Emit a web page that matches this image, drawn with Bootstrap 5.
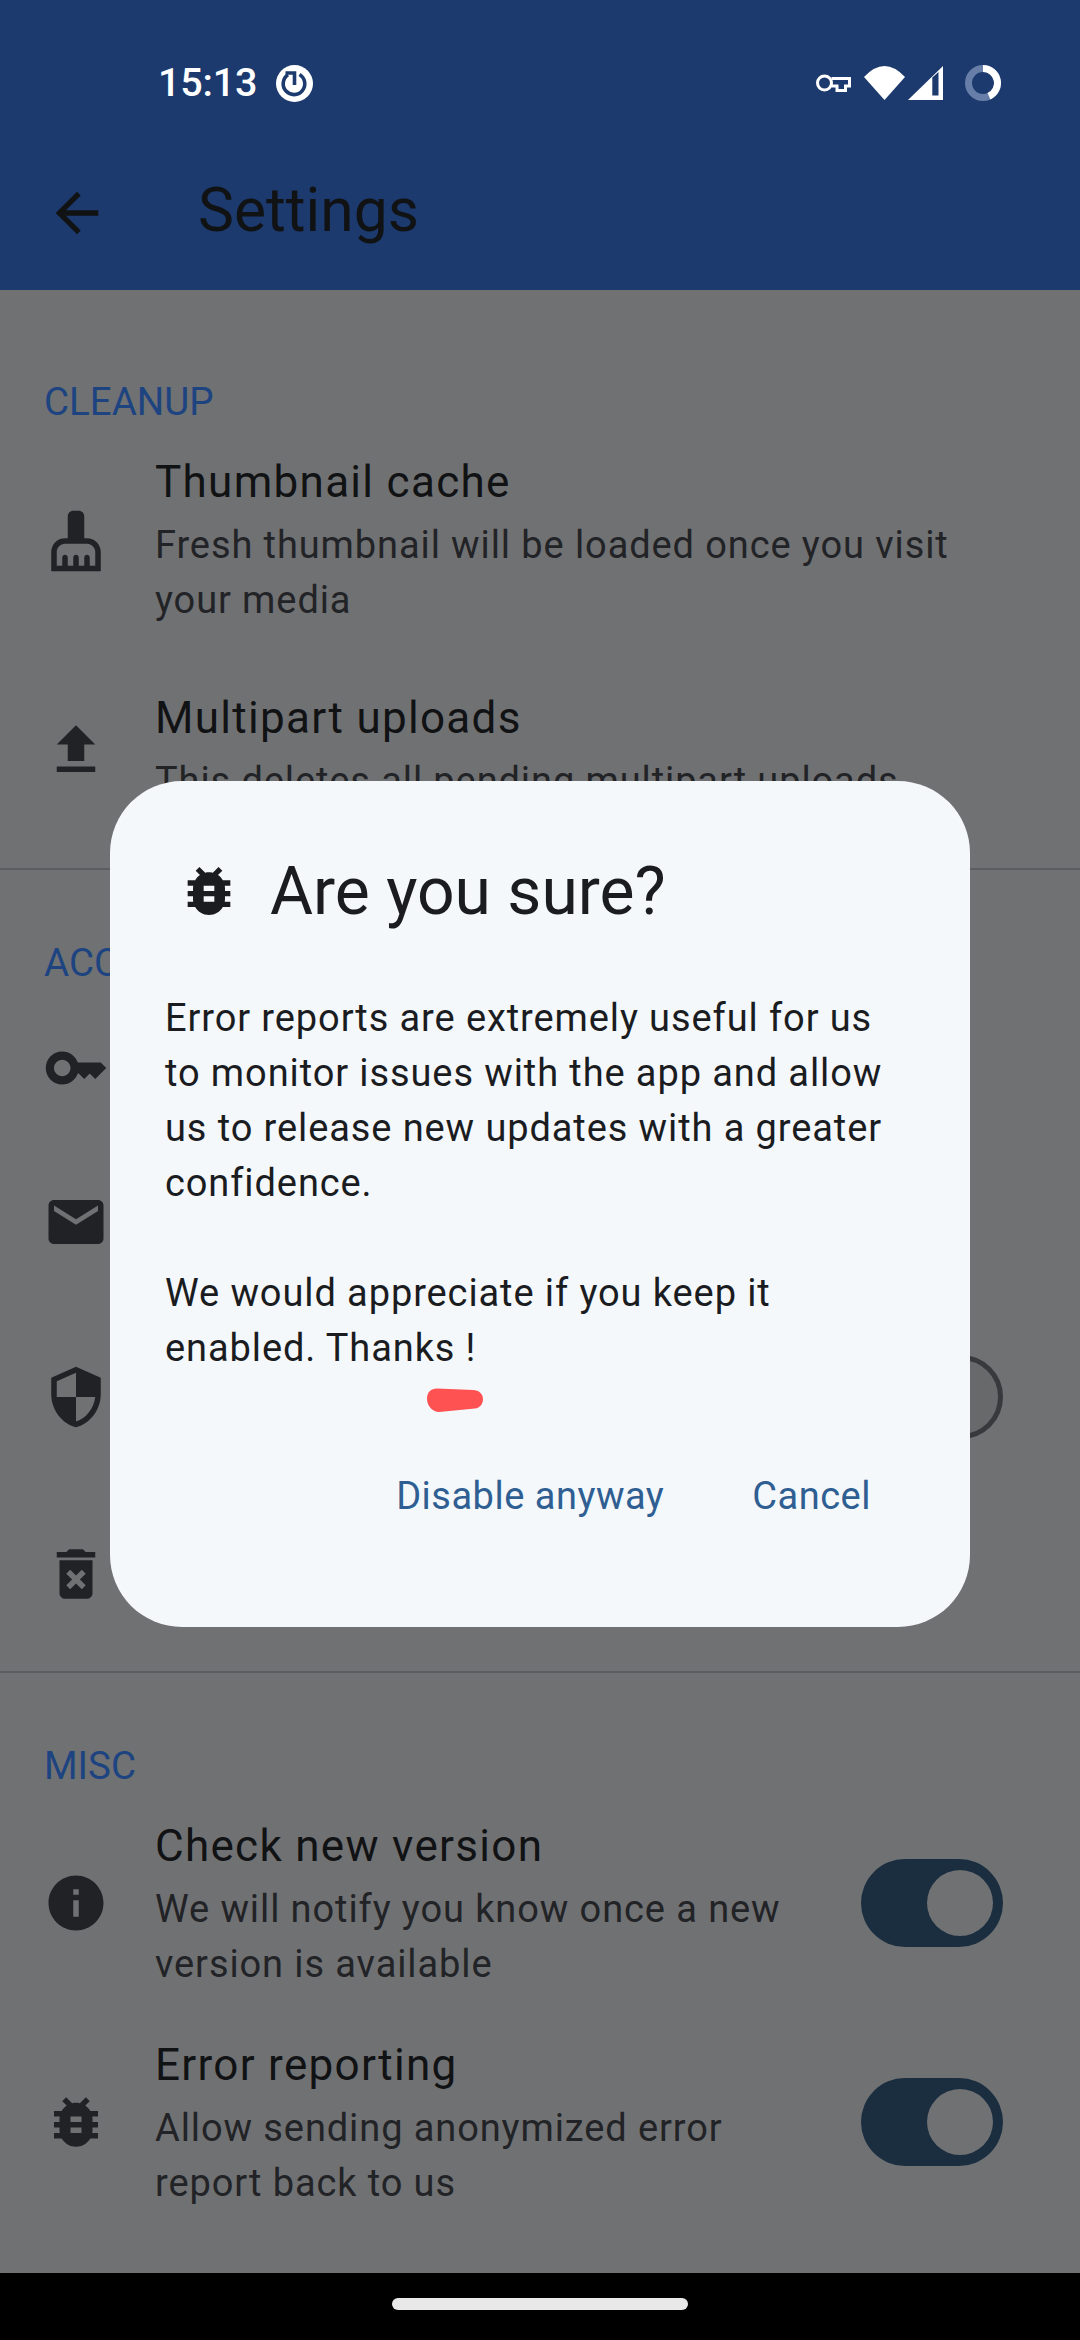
<!DOCTYPE html>
<html lang="en">
<head>
    <meta charset="UTF-8">
    <meta name="viewport" content="width=device-width, initial-scale=1.0">
    <title>Settings</title>
    <link href="https://cdn.jsdelivr.net/npm/bootstrap@5.3.0/dist/css/bootstrap.min.css" rel="stylesheet">
    <style>
        body { background: #707173; font-family: Roboto, "Liberation Sans", sans-serif; width: 1080px; height: 2340px; overflow: hidden; }
        .phone-screen { width: 1080px; height: 2340px; }
        .app-head { height: 290px; background: #1c3a6e; flex: none; }
        .status-line { height: 164px; padding: 2px 79px 0 158px; color: #fff; }
        .clock-text { font-size: 39.5px; line-height: 1; margin-right: 19px; letter-spacing: -0.2px; font-weight: 500; }
        .sync-dot { width: 37px; height: 37px; }
        .gap-wifi { margin-left: 13px; }
        .gap-signal { margin-left: 3px; }
        .gap-ring { margin-left: 22px; }
        .head-bar { height: 100px; margin-top: -1px; padding-left: 45px; color: #111214; }
        .head-title { font-size: 60.5px; line-height: 1; margin-left: 89px; margin-bottom: 4px; }
        .settings-body { min-height: 0; overflow: hidden; }
        .group-one { padding: 91px 0 28px; }
        .group-two { padding: 72px 0 25px; }
        .group-three { padding: 72px 0 0; }
        .group-rule { height: 2px; background: #5c5d60; }
        .group-label { font-size: 38.5px; line-height: 42px; color: #1d4480; padding-left: 44px; }
        .pref-row { padding: 0 77px 0 43px; }
        .pref-icon { width: 66px; height: 66px; fill: #212226; flex: none; margin-right: 46px; }
        .pref-title { font-size: 44px; line-height: 56px; color: #111214; letter-spacing: 1.3px; }
        .pref-sub { font-size: 38px; line-height: 55px; color: #222326; margin-top: 8px; letter-spacing: 0.9px; }
        .row-clean { padding-top: 31px; padding-bottom: 31px; }
        .row-misc { padding-top: 22px; padding-bottom: 23px; }
        .row-misc .pref-icon, .row-misc .switch-on { margin-bottom: 4px; }
        .misc-first { margin-top: 9px; }
        .row-key { height: 168px; }
        .row-mail { height: 140px; }
        .row-shield { height: 210px; }
        .row-trash { height: 144px; }
        .pref-text { width: 645px; }
        .switch-on { width: 142px; height: 88px; border-radius: 44px; background: #1a2e40; padding-right: 10px; flex: none; }
        .switch-on span { width: 66px; height: 66px; border-radius: 50%; background: #707173; display: block; }
        .switch-off { width: 142px; height: 84px; border-radius: 42px; border: 5px solid #38393c; background: #68696b; flex: none; }
        .nav-strip { height: 67px; background: #000; flex: none; }
        .nav-handle { width: 296px; height: 12px; border-radius: 6px; background: #e9e9e9; margin-top: 25px; }
        .dlg-box { position: absolute; left: 110px; top: 781px; width: 860px; height: 846px; background: #f4f8fb; border-radius: 72px; color: #1b1c1f; }
        .dlg-head { padding: 77px 0 0 67px; height: 210px; }
        .dlg-head svg { width: 64px; height: 64px; fill: #1b1c1f; margin-right: 29px; margin-top: 1px; }
        .dlg-title { font-size: 66px; line-height: 1; margin-top: 1px; }
        .dlg-text { padding-left: 55px; font-size: 38px; line-height: 55px; letter-spacing: 0.9px; }
        .dlg-text p { margin: 0 0 55px; }
        .dlg-actions { position: absolute; right: 99px; top: 691px; gap: 88px; color: #2f5f92; font-size: 38px; line-height: 48px; letter-spacing: 0.5px; }
        .red-mark { position: absolute; left: 317px; top: 607px; }
    </style>
</head>
<body>
<div class="phone-screen d-flex flex-column position-relative">

    <!-- App bar -->
    <div class="app-head">
        <div class="status-line d-flex align-items-center justify-content-between">
            <div class="d-flex align-items-center">
                <span class="clock-text">15:13</span>
                <svg class="sync-dot" viewBox="0 0 37 37"><circle cx="18.5" cy="18.5" r="18.5" fill="#fff"/><g fill="none" stroke="#1c3a6e" stroke-width="3.6"><path d="M23.500 9.500A10.800 10.800 0 1 1 12 9.800"/><path d="M9.500 8h9v12"/></g></svg>
            </div>
            <div class="d-flex align-items-center">
                <svg width="35" height="18" viewBox="0 0 35 18" fill="none" stroke="#fff" stroke-width="3"><circle cx="8.500" cy="9" r="7"/><path d="M15.500 4.500h18v7.500h-4v4.500h-8.500V12h-5.500"/></svg>
                <svg class="gap-wifi" width="41" height="34" viewBox="0 0 41 34"><path d="M20.500 34 0 11Q20.500-11 41 11z" fill="#fff"/></svg>
                <svg class="gap-signal" width="35" height="34" viewBox="0 0 35 34"><path d="M35 0v34H0z" fill="#fff"/><path d="M24.300 11.500 30.500 6v23.500h-6.200z" fill="#1c3a6e"/></svg>
                <svg class="gap-ring" width="36" height="36" viewBox="0 0 36 36" fill="none" stroke-width="7"><circle cx="18" cy="18" r="14.500" stroke="#667ea8"/><path d="M18 3.500A14.500 14.500 0 0 1 24 31.200" stroke="#fff"/></svg>
            </div>
        </div>
        <div class="head-bar d-flex align-items-center">
            <svg width="64" height="64" viewBox="0 0 24 24" fill="#111214"><path d="M20 11H7.830l5.590-5.590L12 4l-8 8 8 8 1.410-1.410L7.830 13H20v-2z"/></svg>
            <span class="head-title">Settings</span>
        </div>
    </div>

    <div class="settings-body flex-grow-1">
        <div class="group-one">
            <div class="group-label">CLEANUP</div>
            <div class="pref-row row-clean d-flex align-items-center">
                <svg class="pref-icon" viewBox="0 0 24 24"><path d="M16 11h-1V3c0-1.100-.9-2-2-2h-2c-1.100 0-2 .9-2 2v8H8c-2.760 0-5 2.240-5 5v7h18v-7c0-2.760-2.240-5-5-5zm3 10h-2v-3c0-.55-.45-1-1-1s-1 .45-1 1v3h-2v-3c0-.55-.45-1-1-1s-1 .45-1 1v3H9v-3c0-.55-.45-1-1-1s-1 .45-1 1v3H5v-5c0-1.650 1.350-3 3-3h8c1.650 0 3 1.350 3 3v5z"/></svg>
                <div>
                    <div class="pref-title">Thumbnail cache</div>
                    <div class="pref-sub">Fresh thumbnail will be loaded once you visit your media</div>
                </div>
            </div>
            <div class="pref-row row-clean d-flex align-items-center">
                <svg class="pref-icon" viewBox="0 0 24 24"><path d="M9 16h6v-6h4l-7-7-7 7h4zm-4 2h14v2H5z"/></svg>
                <div>
                    <div class="pref-title">Multipart uploads</div>
                    <div class="pref-sub">This deletes all pending multipart uploads</div>
                </div>
            </div>
        </div>
        <div class="group-rule"></div>

        <div class="group-two">
            <div class="group-label">ACCOUNT</div>
            <div class="pref-row row-key d-flex align-items-center">
                <svg class="pref-icon" viewBox="0 0 24 24"><path d="M21 10h-8.350C11.830 7.670 9.610 6 7 6c-3.310 0-6 2.690-6 6s2.690 6 6 6c2.610 0 4.830-1.670 5.650-4H13l2 2 2-2 2 2 4-4.040L21 10zM7 15c-1.650 0-3-1.350-3-3s1.350-3 3-3 3 1.350 3 3-1.350 3-3 3z"/></svg>
            </div>
            <div class="pref-row row-mail d-flex align-items-center">
                <svg class="pref-icon" viewBox="0 0 24 24"><path d="M20 4H4c-1.100 0-1.990.9-1.990 2L2 18c0 1.100.9 2 2 2h16c1.100 0 2-.9 2-2V6c0-1.100-.9-2-2-2zm0 4l-8 5-8-5V6l8 5 8-5v2z"/></svg>
            </div>
            <div class="pref-row row-shield d-flex align-items-center justify-content-between">
                <svg class="pref-icon" viewBox="0 0 24 24"><path d="M12 1L3 5v6c0 5.550 3.840 10.740 9 12 5.160-1.260 9-6.450 9-12V5l-9-4zm0 10.990h7c-.53 4.120-3.280 7.790-7 8.940V12H5V6.300l7-3.110v8.800z"/></svg>
                <div class="switch-off"></div>
            </div>
            <div class="pref-row row-trash d-flex align-items-center">
                <svg class="pref-icon" viewBox="0 0 24 24"><path d="M6 19c0 1.100.9 2 2 2h8c1.100 0 2-.9 2-2V7H6v12zm2.460-7.120l1.410-1.410L12 12.590l2.120-2.120 1.410 1.410L13.410 14l2.120 2.120-1.410 1.410L12 15.410l-2.120 2.120-1.410-1.410L10.590 14l-2.130-2.120zM15.500 4l-1-1h-5l-1 1H5v2h14V4z"/></svg>
            </div>
        </div>
        <div class="group-rule"></div>

        <div class="group-three">
            <div class="group-label">MISC</div>
            <div class="pref-row row-misc misc-first d-flex align-items-center justify-content-between">
                <div class="d-flex align-items-center">
                    <svg class="pref-icon" viewBox="0 0 24 24"><path d="M12 2C6.480 2 2 6.480 2 12s4.480 10 10 10 10-4.480 10-10S17.520 2 12 2zm1 15h-2v-6h2v6zm0-8h-2V7h2v2z"/></svg>
                    <div class="pref-text">
                        <div class="pref-title">Check new version</div>
                        <div class="pref-sub">We will notify you know once a new version is available</div>
                    </div>
                </div>
                <div class="switch-on d-flex align-items-center justify-content-end"><span></span></div>
            </div>
            <div class="pref-row row-misc d-flex align-items-center justify-content-between">
                <div class="d-flex align-items-center">
                    <svg class="pref-icon" viewBox="0 0 24 24"><path d="M20 8h-2.810c-.45-.78-1.070-1.450-1.820-1.960L17 4.410 15.590 3l-2.170 2.170C12.960 5.060 12.490 5 12 5c-.49 0-.96.06-1.410.17L8.410 3 7 4.410l1.620 1.630C7.880 6.550 7.260 7.220 6.810 8H4v2h2.090c-.05.33-.09.66-.09 1v1H4v2h2v1c0 .34.04.67.09 1H4v2h2.810c1.040 1.790 2.970 3 5.190 3s4.150-1.210 5.190-3H20v-2h-2.090c.05-.33.09-.66.09-1v-1h2v-2h-2v-1c0-.34-.04-.67-.09-1H20V8zm-6 8h-4v-2h4v2zm0-4h-4v-2h4v2z"/></svg>
                    <div class="pref-text">
                        <div class="pref-title">Error reporting</div>
                        <div class="pref-sub">Allow sending anonymized error report back to us</div>
                    </div>
                </div>
                <div class="switch-on d-flex align-items-center justify-content-end"><span></span></div>
            </div>
        </div>
    </div>

    <div class="nav-strip d-flex justify-content-center">
        <div class="nav-handle"></div>
    </div>

    <!-- Confirm dialog -->
    <div class="dlg-box">
        <div class="dlg-head d-flex align-items-start">
            <svg viewBox="0 0 24 24"><path d="M20 8h-2.810c-.45-.78-1.070-1.450-1.820-1.960L17 4.410 15.590 3l-2.170 2.170C12.960 5.060 12.490 5 12 5c-.49 0-.96.06-1.410.17L8.410 3 7 4.410l1.620 1.630C7.880 6.550 7.260 7.220 6.810 8H4v2h2.090c-.05.33-.09.66-.09 1v1H4v2h2v1c0 .34.04.67.09 1H4v2h2.810c1.040 1.790 2.970 3 5.190 3s4.150-1.210 5.190-3H20v-2h-2.090c.05-.33.09-.66.09-1v-1h2v-2h-2v-1c0-.34-.04-.67-.09-1H20V8zm-6 8h-4v-2h4v2zm0-4h-4v-2h4v2z"/></svg>
            <span class="dlg-title">Are you sure?</span>
        </div>
        <div class="dlg-text">
            <p>Error reports are extremely useful for us<br>to monitor issues with the app and allow<br>us to release new updates with a greater<br>confidence.</p>
            <p>We would appreciate if you keep it<br>enabled. Thanks !</p>
        </div>
        <svg class="red-mark" width="56" height="24" viewBox="0 0 56 24"><path d="M10 0.500 46 2c6 0 10 4 10 9s-3 9-8 9.500L12 24C6 24 0 18 0 11S4 .5 10 .5z" fill="#fe5252"/></svg>
        <div class="dlg-actions d-flex">
            <span>Disable anyway</span>
            <span>Cancel</span>
        </div>
    </div>
</div>
<script src="https://cdn.jsdelivr.net/npm/bootstrap@5.3.0/dist/js/bootstrap.bundle.min.js"></script>
</body>
</html>
